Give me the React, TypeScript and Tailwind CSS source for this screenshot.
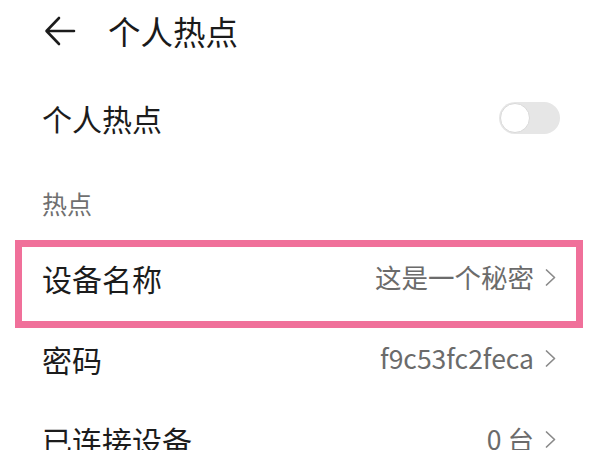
import React from "react";

const font = { fontFamily: '"Noto Sans CJK SC", "Noto Sans", sans-serif' };

function Chevron() {
  return (
    <svg width="13" height="19" viewBox="0 0 13 19" className="ml-[10px] shrink-0">
      <path d="M2.5 2 L10.5 9.5 L2.5 17" fill="none" stroke="#8a8a8a" strokeWidth="1.7" strokeLinecap="round" strokeLinejoin="round" />
    </svg>
  );
}

function Row({ label, value }: { label: string; value: string }) {
  return (
    <div className="h-[81px] flex items-center pl-[42px] pr-[43px]">
      <div className="text-[30px] leading-none text-[#1c1c1c]">{label}</div>
      <div className="ml-auto flex items-center">
        <span className="text-[26.5px] leading-none text-[#6b6b6b]">{value}</span>
        <Chevron />
      </div>
    </div>
  );
}

export default function App() {
  return (
    <div className="relative w-[600px] h-[450px] overflow-hidden bg-white" style={font}>
      <div className="h-[62px] flex items-center pl-[44px]">
        <svg width="32" height="32" viewBox="0 0 32 32" className="shrink-0">
          <path d="M30 16 H3 M15 3 L2.5 16 L15 29" fill="none" stroke="#1c1c1c" strokeWidth="2.6" strokeLinecap="round" strokeLinejoin="round" />
        </svg>
        <div className="ml-[32px] text-[32.5px] leading-none text-[#1a1a1a]">个人热点</div>
      </div>
      <div className="h-[112px] flex items-center pl-[42px] pr-[40px]">
        <div className="text-[30px] leading-none text-[#1c1c1c]">个人热点</div>
        <div className="ml-auto w-[61px] h-[32px] rounded-full bg-[#e6e6e6] p-[1px] flex items-center">
          <div className="w-[30px] h-[30px] rounded-full bg-white border-[1.5px] border-[#d9d9d9]" />
        </div>
      </div>
      <div className="h-[63px] flex items-center pl-[42px] pb-[4px]">
        <div className="text-[25px] leading-none text-[#707070]">热点</div>
      </div>
      <Row label="设备名称" value="这是一个秘密" />
      <Row label="密码" value="f9c53fc2feca" />
      <Row label="已连接设备" value="0 台" />
      <div className="absolute left-[15px] top-[240px] w-[568px] h-[88px] border-[7.5px] border-[#f0709a]" />
    </div>
  );
}
